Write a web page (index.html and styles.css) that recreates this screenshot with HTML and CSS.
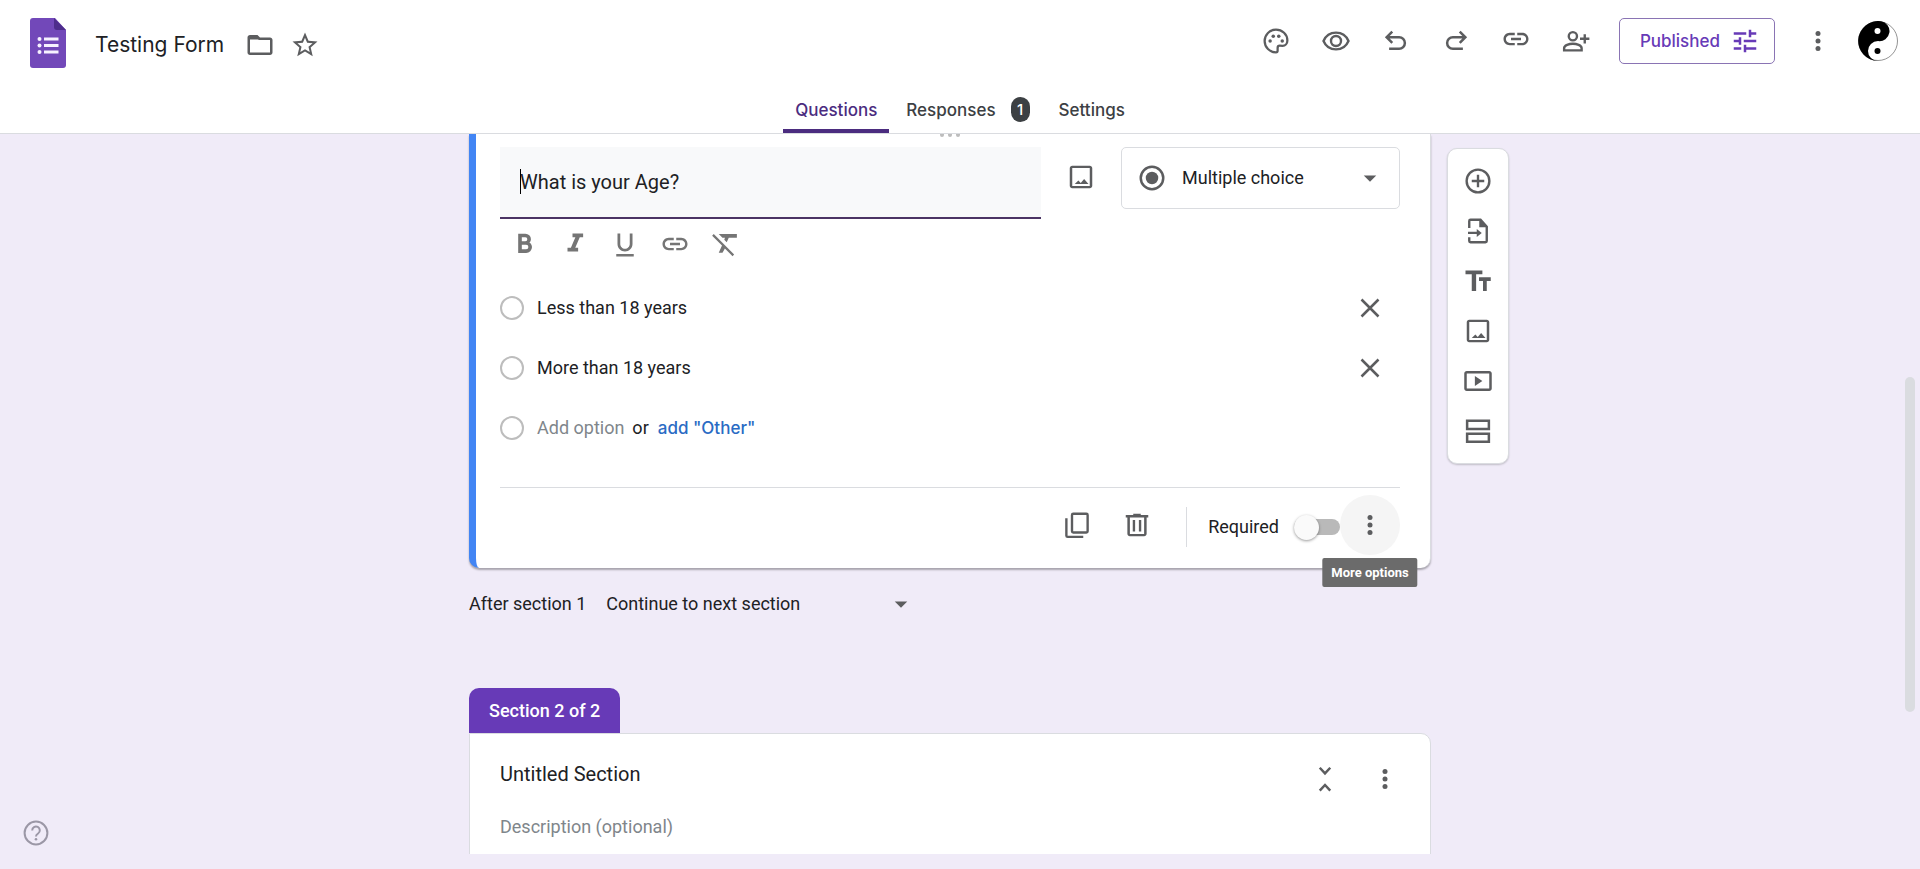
FILE: index.html
```html
<!DOCTYPE html>
<html lang="en">
<head>
<meta charset="utf-8">
<meta name="viewport" content="width=device-width, initial-scale=1">
<title>Testing Form</title>
<link rel="stylesheet" href="styles.css">
</head>
<body>
<svg class="sprite" aria-hidden="true">
  <symbol id="i-more" viewBox="0 0 24 24"><circle cx="12" cy="6" r="2"/><circle cx="12" cy="12" r="2"/><circle cx="12" cy="18" r="2"/></symbol>
  <symbol id="i-image" viewBox="0 0 24 24"><path d="M19 4.800v14.400H5V4.800h14m0-1.800H5c-1.100 0-2 .9-2 2v14c0 1.100.9 2 2 2h14c1.100 0 2-.9 2-2V5c0-1.100-.9-2-2-2zm-4.500 10.500-2.700 3.300-1.900-2L7 17.500h11z"/></symbol>
  <symbol id="i-link" viewBox="0 0 24 24"><path d="M3.900 12c0-1.710 1.390-3.100 3.100-3.100h4V7H7c-2.760 0-5 2.240-5 5s2.240 5 5 5h4v-1.900H7c-1.710 0-3.100-1.390-3.100-3.100zM8 13h8v-2H8v2zm9-6h-4v1.900h4c1.710 0 3.100 1.390 3.100 3.100s-1.390 3.100-3.100 3.100h-4V17h4c2.760 0 5-2.240 5-5s-2.240-5-5-5z"/></symbol>
  <symbol id="i-close" viewBox="0 0 24 24"><path d="M5.200 5.200l13.600 13.600m0-13.600l-13.600 13.600" fill="none" stroke="currentColor" stroke-width="2"/></symbol>
  <symbol id="i-drop" viewBox="0 0 24 24"><path d="M7 10l5 5 5-5z"/></symbol>
</svg>

<header class="topbar">
  <div class="topbar-row">
    <a class="logo" href="#" aria-label="Forms home">
      <svg viewBox="0 0 36 50"><path d="M3 0h22l11 12v35a3 3 0 0 1-3 3H3a3 3 0 0 1-3-3V3a3 3 0 0 1 3-3z" fill="#7248b9"/><path d="M24 0l12 12h-9a3 3 0 0 1-3-3z" fill="#4e2d8c"/><g fill="#f6f1ff"><circle cx="9.500" cy="21" r="2"/><circle cx="9.500" cy="27.500" r="2"/><circle cx="9.500" cy="34" r="2"/><path d="M14 19.500h14.500v3H14zM14 26h14.500v3H14zM14 32.500h14.500v3H14z"/></g></svg>
    </a>
    <input class="doc-title" type="text" value="Testing Form" aria-label="Form title">
    <button class="title-btn" aria-label="Move to folder"><svg class="icon" viewBox="0 0 24 24"><path d="M9.170 6l2 2H20v10H4V6h5.170M10 4H4c-1.100 0-1.990.9-1.990 2L2 18c0 1.100.9 2 2 2h16c1.100 0 2-.9 2-2V8c0-1.100-.9-2-2-2h-8l-2-2z"/><path d="M3 5h7l2 2.500H3z"/></svg></button>
    <button class="title-btn" aria-label="Star"><svg class="icon" viewBox="0 0 24 24"><path d="M22 9.240l-7.190-.62L12 2 9.190 8.630 2 9.240l5.460 4.730L5.820 21 12 17.270 18.180 21l-1.630-7.030L22 9.240zM12 15.400l-3.760 2.270 1-4.280-3.320-2.880 4.380-.38L12 6.100l1.710 4.040 4.380.38-3.320 2.880 1 4.280L12 15.400z"/></svg></button>
    <div class="actions">
      <button class="icon-btn" aria-label="Customize theme"><svg class="icon" viewBox="0 0 24 24"><path d="M12 2.900a9.100 9.100 0 0 0 0 18.200c.9 0 1.300-.6 1.300-1.500v-2.100c0-1 .7-1.700 1.700-1.700h2.200c2.300 0 3.900-1.900 3.900-4.300 0-4.800-4.100-8.600-9.100-8.600z" fill="none" stroke="currentColor" stroke-width="1.800"/><circle cx="7.300" cy="12" r="1.400"/><circle cx="9.800" cy="8.200" r="1.400"/><circle cx="14.200" cy="8.200" r="1.400"/><circle cx="17" cy="12" r="1.400"/></svg></button>
      <button class="icon-btn" aria-label="Preview"><svg class="icon" viewBox="0 0 24 24"><g fill="none" stroke="currentColor" stroke-width="1.900"><path d="M2 12c1.700-4 5.500-6.700 10-6.700s8.300 2.700 10 6.700c-1.700 4-5.500 6.700-10 6.700S3.700 16 2 12z"/><circle cx="12" cy="12" r="4"/></g></svg></button>
      <button class="icon-btn" aria-label="Undo"><svg class="icon" viewBox="0 0 24 24"><path d="M9 4.500L4.500 9 9 13.500M4.500 9h10a4.600 4.600 0 0 1 0 9.200H6.500" fill="none" stroke="currentColor" stroke-width="2"/></svg></button>
      <button class="icon-btn" aria-label="Redo"><svg class="icon" viewBox="0 0 24 24"><path d="M15 4.500L19.500 9 15 13.500M19.500 9h-10a4.600 4.600 0 0 0 0 9.200h8" fill="none" stroke="currentColor" stroke-width="2"/></svg></button>
      <button class="icon-btn link-btn" aria-label="Copy link"><svg class="icon"><use href="#i-link"/></svg></button>
      <button class="icon-btn" aria-label="Add collaborators"><svg class="icon" viewBox="0 0 24 24"><g fill="none" stroke="currentColor" stroke-width="1.900"><circle cx="9.500" cy="8.200" r="3.300"/><path d="M2.500 19.500v-1.800c0-2.300 4-3.500 7-3.500s7 1.200 7 3.500v1.800zM19 6.500v7.500M15.200 10.200h7.500"/></g></svg></button>
      <button class="published">Published
        <svg class="icon" viewBox="0 0 24 24"><path d="M3 17v2h6v-2H3zM3 5v2h10V5H3zm10 16v-2h8v-2h-8v-2h-2v6h2zM7 9v2H3v2h4v2h2V9H7zm14 4v-2H11v2h10zm-6-4h2V7h4V5h-4V3h-2v6z"/></svg>
      </button>
      <button class="icon-btn" aria-label="More"><svg class="icon"><use href="#i-more"/></svg></button>
      <button class="avatar" aria-label="Account"><svg viewBox="0 0 40 40"><circle cx="20" cy="20" r="19.500" fill="#fff" stroke="#777" stroke-width=".8"/><path d="M23 .2A20 20 0 1 0 20 40 10 10 0 0 1 20 20 10 10 0 0 0 23 .2z" fill="#000"/><circle cx="19.500" cy="10" r="3" fill="#fff"/><circle cx="19.500" cy="30" r="3" fill="#000"/></svg></button>
    </div>
  </div>
  <nav class="tabs">
    <a class="tab active" href="#" aria-current="page">Questions</a>
    <a class="tab" href="#">Responses <span class="badge">1</span></a>
    <a class="tab" href="#">Settings</a>
  </nav>
</header>

<main class="canvas">
  <div class="column">
    <section class="card question" aria-label="Question">
      <div class="drag" aria-hidden="true"><i></i><i></i><i></i></div>
      <div class="question-head">
        <div class="question-field">
          <input type="text" value="What is your Age?" aria-label="Question text">
          <span class="caret"></span>
        </div>
        <button class="icon-btn" aria-label="Add image"><svg class="icon"><use href="#i-image"/></svg></button>
        <label class="type-select">
          <svg class="icon" viewBox="0 0 24 24"><circle cx="12" cy="12" r="9" fill="none" stroke="currentColor" stroke-width="2"/><circle cx="12" cy="12" r="5"/></svg>
          <select aria-label="Question type"><option>Multiple choice</option></select>
          <svg class="icon"><use href="#i-drop"/></svg>
        </label>
      </div>
      <div class="format">
        <button class="icon-btn" aria-label="Bold"><svg class="icon" viewBox="0 0 24 24"><path d="M8 5.200H12.300a3 3 0 0 1 0 6H8zM8 11.200H12.900a3.200 3.200 0 0 1 0 6.500H8z" fill="none" stroke="currentColor" stroke-width="2.900"/></svg></button>
        <button class="icon-btn" aria-label="Italic"><svg class="icon" viewBox="0 0 24 24"><path d="M10 3.500v3h2.300l-3.600 8.500H6v3h8.500v-3h-2.300l3.600-8.500H18.500v-3z"/></svg></button>
        <button class="icon-btn" aria-label="Underline"><svg class="icon" viewBox="0 0 24 24"><path d="M12 18c3.310 0 6-2.690 6-6V3.500h-2.200V12c0 2.100-1.700 3.800-3.800 3.800S8.200 14.100 8.200 12V3.500H6V12c0 3.310 2.690 6 6 6zM5 20v2h14v-2z"/></svg></button>
        <button class="icon-btn" aria-label="Insert link"><svg class="icon"><use href="#i-link"/></svg></button>
        <button class="icon-btn" aria-label="Remove formatting"><svg class="icon" viewBox="0 0 24 24"><path d="M7 4h14.500v3H15l-1.600 3.600-2-2L12 7h-2zM3 4L1.700 5.300l7.900 7.900L7 19h3l1.900-3.500 6.100 6.200 1.300-1.300z"/></svg></button>
      </div>
      <ul class="options">
        <li class="option"><span class="dot"></span><input type="text" value="Less than 18 years" aria-label="Option 1"><button class="icon-btn" aria-label="Remove option 1"><svg class="icon"><use href="#i-close"/></svg></button></li>
        <li class="option"><span class="dot"></span><input type="text" value="More than 18 years" aria-label="Option 2"><button class="icon-btn" aria-label="Remove option 2"><svg class="icon"><use href="#i-close"/></svg></button></li>
        <li class="option"><span class="dot"></span><button class="add-option">Add option</button><span class="or">or</span><button class="add-other">add "Other"</button></li>
      </ul>
      <div class="question-foot">
        <button class="icon-btn" aria-label="Duplicate"><svg class="icon" viewBox="0 0 24 24"><g fill="none" stroke="currentColor" stroke-width="1.900"><rect x="8" y="3" width="12.500" height="15" rx="1"/><path d="M3.500 6.500v14c0 .6.400 1 1 1H17"/></g></svg></button>
        <button class="icon-btn" aria-label="Delete"><svg class="icon" viewBox="0 0 24 24"><path d="M15 4V3H9v1H3v2h1.300v13c0 1.100.9 2 2 2h11.400c1.100 0 2-.9 2-2V6H21V4h-6zm2.700 15.200H6.300V6h11.400v13.200zM8.600 8h1.900v9.200H8.600zm4.900 0h1.900v9.200h-1.900z"/></svg></button>
        <label class="required">Required <input class="switch" type="checkbox" role="switch"></label>
        <div class="more-wrap">
          <button class="more-btn" aria-label="More options" aria-describedby="more-tip"><svg class="icon"><use href="#i-more"/></svg></button>
          <span class="tooltip" id="more-tip" role="tooltip">More options</span>
        </div>
      </div>
    </section>

    <label class="after">After section 1
      <span class="after-select">
        <select><option>Continue to next section</option></select>
        <svg class="icon"><use href="#i-drop"/></svg>
      </span>
    </label>

    <section class="section-block" aria-label="Section 2">
      <h2 class="section-tab">Section 2 of 2</h2>
      <div class="card section-card">
        <div class="section-text">
          <input class="section-title" type="text" value="Untitled Section" aria-label="Section title">
          <input class="section-desc" type="text" placeholder="Description (optional)" aria-label="Section description">
        </div>
        <div class="section-actions">
          <button class="icon-btn" aria-label="Collapse section"><svg class="icon" viewBox="0 0 24 24"><path d="M7.800 3l4.200 4.500L16.200 3M7.800 21.300l4.200-4.500 4.200 4.500" fill="none" stroke="currentColor" stroke-width="2"/></svg></button>
          <button class="icon-btn" aria-label="Section options"><svg class="icon"><use href="#i-more"/></svg></button>
        </div>
      </div>
    </section>
  </div>

  <aside class="toolbox" aria-label="Add to form">
    <button class="icon-btn" aria-label="Add question"><svg class="icon" viewBox="0 0 24 24"><g fill="none" stroke="currentColor" stroke-width="1.900"><circle cx="12" cy="12" r="9.100"/><path d="M12 7v10M7 12h10"/></g></svg></button>
    <button class="icon-btn" aria-label="Import questions"><svg class="icon" viewBox="0 0 24 24"><path d="M5 9.500V4c0-.6.400-1 1-1h8l5 5.500V20c0 .6-.4 1-1 1H6c-.6 0-1-.4-1-1v-3" fill="none" stroke="currentColor" stroke-width="1.900"/><path d="M13 2.500l6.500 6.500H13zM4 12.600h7V10.300l4 3.200-4 3.200v-2.300H4z"/></svg></button>
    <button class="icon-btn" aria-label="Add title and description"><svg class="icon" viewBox="0 0 24 24"><path d="M2 3.500v3h5V20h3.500V6.500h5v-3H2zM22.200 9h-9.400v2.900h3.200V20h3v-8.100h3.200z"/></svg></button>
    <button class="icon-btn" aria-label="Add image"><svg class="icon"><use href="#i-image"/></svg></button>
    <button class="icon-btn" aria-label="Add video"><svg class="icon" viewBox="0 0 24 24"><path d="M9.500 8v8l6-4zM21 4H3c-1.100 0-2 .9-2 2v12c0 1.100.9 2 2 2h18c1.100 0 2-.9 2-2V6c0-1.100-.9-2-2-2zM21 18H3V6h18z"/></svg></button>
    <button class="icon-btn" aria-label="Add section"><svg class="icon" viewBox="0 0 24 24"><path d="M3.300 3.800h17.400v6.500H3.300zM3.300 14.100h17.400v6.500H3.300z" fill="none" stroke="currentColor" stroke-width="2"/></svg></button>
  </aside>

  <div class="scroll-thumb"></div>
</main>
<button class="help" aria-label="Help"><svg viewBox="0 0 26 26"><circle cx="13" cy="13" r="11.400" fill="none" stroke="currentColor" stroke-width="2"/><path d="M9.200 10.400a3.800 3.800 0 1 1 5.900 3.100c-1.300.9-2.100 1.500-2.100 3" fill="none" stroke="currentColor" stroke-width="2"/><circle cx="13" cy="19.200" r="1.300"/></svg></button>
</body>
</html>
```
FILE: styles.css
```css
* { box-sizing: border-box; }

body {
  margin: 0;
  height: 100vh;
  display: flex;
  flex-direction: column;
  background: #f0ebf8;
  color: #202124;
  font: 18px/24px Roboto, "Liberation Sans", sans-serif;
  overflow: hidden;
}

button, input, select {
  font: inherit;
  color: inherit;
  background: none;
  border: 0;
  padding: 0;
  margin: 0;
  border-radius: 0;
  outline: 0;
}
button { cursor: pointer; }
select { appearance: none; }
a { color: inherit; text-decoration: none; }

.sprite { display: none; }
.icon { width: 30px; height: 30px; fill: currentColor; display: block; flex: none; }
.icon-btn {
  width: 50px;
  height: 50px;
  flex: none;
  display: grid;
  place-items: center;
  color: #5c5d5f;
}

/* Top bar */
.topbar {
  flex: none;
  background: #fff;
  border-bottom: 1px solid #dadce0;
}
.topbar-row {
  display: flex;
  align-items: center;
  height: 86px;
  padding: 0 22px 0 30px;
}
.logo { width: 36px; height: 50px; margin-right: 29px; }
.logo svg { display: block; width: 36px; height: 50px; }
.doc-title {
  width: 145px;
  height: 34px;
  padding-top: 2px;
  font: 21px/30px Inter, Roboto, sans-serif;
}
.title-btn { width: 30px; height: 30px; margin: 3px 10px 0 5px; color: #5c5d5f; }
.actions {
  display: flex;
  align-items: center;
  gap: 10px;
  margin-left: auto;
  height: 81px;
  align-self: flex-start;
}
.link-btn { padding-bottom: 4px; }
.published {
  display: flex;
  align-items: center;
  justify-content: center;
  gap: 10px;
  height: 46px;
  padding: 0 14px 0 20px;
  margin: 0 8px;
  border: 1px solid #8a74b4;
  border-radius: 5px;
  color: #673ab7;
  font: 500 17px/24px Inter, Roboto, sans-serif;
}
.avatar { width: 40px; height: 40px; margin-left: 5px; }
.avatar svg { display: block; width: 40px; height: 40px; }

.tabs { display: flex; justify-content: center; gap: 5px; height: 47px; }
.tab {
  display: flex;
  align-items: center;
  gap: 15px;
  padding: 4px 12px 0;
  border-bottom: 4px solid transparent;
  color: #3c4043;
  font: 500 17px/24px Inter, Roboto, sans-serif;
}
.tab.active { color: #4b2c7f; border-color: #4b2c7f; border-radius: 4px 4px 0 0; }
.badge {
  width: 19px;
  height: 25px;
  border-radius: 10px;
  background: #3c4043;
  color: #fff;
  font-size: 15px;
  line-height: 25px;
  text-align: center;
}

/* Editor canvas */
.canvas {
  position: relative;
  flex: 1;
  min-height: 0;
  margin-bottom: 15px;
  padding-right: 20px;
  display: grid;
  grid-template-columns: 1fr minmax(0, 962px) 1fr;
  align-items: start;
  overflow: hidden;
}
.column { grid-column: 2; }
.card { background: #fff; border: 1px solid #dadce0; }

.question {
  position: relative;
  padding: 13px 30px 13px 24px;
  border-width: 0 1px 0 7px;
  border-left-color: #4285f4;
  border-radius: 0 0 10px 10px;
  box-shadow: 0 2px 2px rgba(0, 0, 0, .3);
}
.drag {
  position: absolute;
  top: 0;
  left: 0;
  right: 7px;
  display: flex;
  justify-content: center;
  gap: 4px;
}
.drag i { width: 4px; height: 3px; border-radius: 0 0 2px 2px; background: #bdbdbd; }

.question-head { display: flex; gap: 15px; align-items: flex-start; }
.question-head .icon-btn { margin-top: 5px; }
.question-field {
  position: relative;
  flex: 1;
  background: #f8f9fa;
  border-bottom: 2px solid #4b3464;
}
.question-field input {
  display: block;
  width: 100%;
  height: 70px;
  padding: 0 20px;
  font-size: 20px;
  line-height: 30px;
}
.caret { position: absolute; left: 20px; top: 22px; width: 1px; height: 25px; background: #000; }
.type-select {
  display: flex;
  align-items: center;
  width: 279px;
  height: 62px;
  padding: 0 14px 0 15px;
  border: 1px solid #dadce0;
  border-radius: 5px;
  color: #5c5d5f;
}
.type-select select { flex: 1; margin-left: 15px; color: #202124; }

.format { display: flex; }
.format .icon-btn { color: #757575; }

.options { list-style: none; margin: 9px 0 29px; padding: 0; }
.option { display: flex; align-items: center; height: 60px; }
.option input { flex: 1; }
.option .icon-btn { margin-right: 5px; }
.dot {
  width: 24px;
  height: 24px;
  margin-right: 13px;
  border: 2px solid #bdbdbd;
  border-radius: 50%;
}
.add-option { color: #80868b; }
.or { margin: 0 9px 0 8px; }
.add-other { color: #2a6bc4; font: 500 17px/24px Inter, Roboto, sans-serif; }

.question-foot {
  display: flex;
  align-items: center;
  justify-content: flex-end;
  gap: 10px;
  padding-top: 7px;
  border-top: 1px solid #dadce0;
}
.required {
  display: flex;
  align-items: center;
  gap: 15px;
  height: 40px;
  margin: 3px -10px 0 14px;
  padding-left: 21px;
  border-left: 1px solid #dadce0;
}
.switch {
  appearance: none;
  position: relative;
  width: 46px;
  height: 16px;
  border-radius: 8px;
  background: #b9b9b9;
}
.switch::before {
  content: "";
  position: absolute;
  left: 0;
  top: -4px;
  width: 25px;
  height: 25px;
  border-radius: 50%;
  background: #fafafa;
  box-shadow: 0 1px 3px rgba(0, 0, 0, .4);
}
.more-wrap { position: relative; }
.more-btn {
  display: grid;
  place-items: center;
  width: 60px;
  height: 60px;
  border-radius: 50%;
  background: #f5f5f5;
  color: #5c5d5f;
}
.tooltip {
  position: absolute;
  top: 63px;
  left: 50%;
  transform: translateX(-50%);
  padding: 0 9px;
  border-radius: 2px;
  background: #6b6b6b;
  color: #fff;
  font-size: 13px;
  font-weight: 700;
  line-height: 29px;
  white-space: nowrap;
}

.after { display: flex; align-items: center; gap: 20px; height: 72px; }
.after-select { display: flex; align-items: center; width: 310px; color: #5c5d5f; }
.after-select select { flex: 1; color: #202124; }

.section-block { margin-top: 48px; }
.section-tab {
  display: inline-block;
  margin: 0;
  padding: 0 20px;
  border-radius: 10px 10px 0 0;
  background: #673ab7;
  color: #fff;
  font-size: 18px;
  font-weight: 500;
  line-height: 45px;
  vertical-align: top;
}
.section-card {
  display: flex;
  height: 150px;
  padding: 20px 20px 0 30px;
  border-radius: 0 10px 0 0;
}
.section-text { flex: 1; display: flex; flex-direction: column; gap: 26px; padding-top: 5px; }
.section-title { font-size: 20px; line-height: 30px; }
.section-desc::placeholder { color: #80868b; opacity: 1; }
.section-actions { display: flex; gap: 10px; }

.toolbox {
  grid-column: 3;
  justify-self: start;
  margin: 14px 0 0 16px;
  padding: 7px 5px;
  border: 1px solid #dadce0;
  border-radius: 10px;
  background: #fff;
  box-shadow: 0 1px 2px rgba(0, 0, 0, .2);
}
.scroll-thumb {
  position: absolute;
  right: 5px;
  top: 243px;
  width: 10px;
  height: 335px;
  border-radius: 5px;
  background: #dadce0;
}
.help {
  position: fixed;
  left: 23px;
  bottom: 23px;
  width: 26px;
  height: 26px;
  color: #9b97a6;
}
.help svg { display: block; width: 26px; height: 26px; fill: currentColor; }
```
